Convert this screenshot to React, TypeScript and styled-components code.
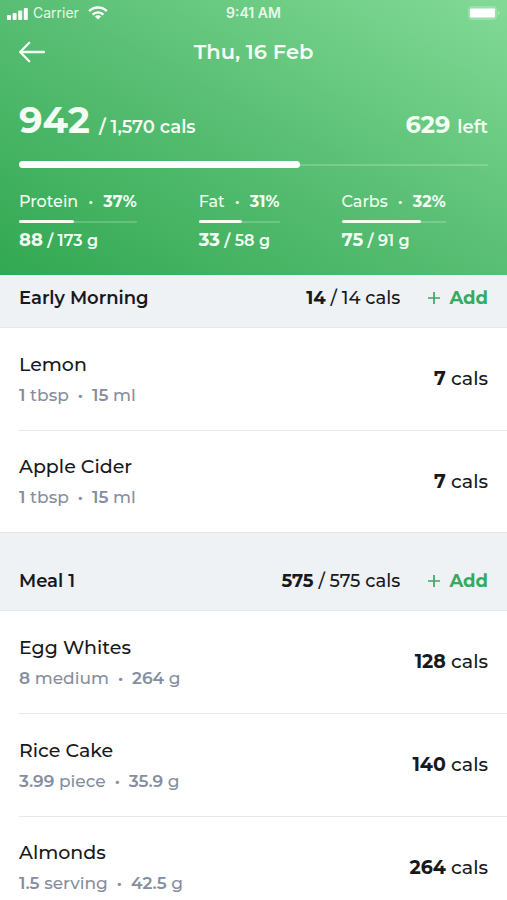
import React from "react";
import styled, { createGlobalStyle } from "styled-components";

const GlobalStyle = createGlobalStyle`
  *, *::before, *::after { box-sizing: border-box; }
  body {
    margin: 0;
    background: #ffffff;
    color: #17191c;
    font-family: Montserrat, Inter, "Open Sans", sans-serif;
    font-size: 18px;
    font-weight: 500;
  }
  h1, h2, h3, p, ul { margin: 0; padding: 0; font: inherit; }
  ul { list-style: none; }
  button { border: 0; padding: 0; background: none; color: inherit; font: inherit; cursor: pointer; }
`;

const Screen = styled.div`
  display: flex;
  flex-direction: column;
  height: 100vh;
`;

const Header = styled.header`
  flex: none;
  padding-bottom: 24px;
  color: #f3fff5;
  background: linear-gradient(to top right, #32a852 0%, #58be73 50%, #82da96 100%);
`;

const StatusBar = styled.div`
  display: grid;
  grid-template-columns: 1fr auto 1fr;
  align-items: center;
  height: 26px;
  padding: 0 7px;
  font-family: Inter, sans-serif;
  font-size: 14px;
  line-height: 16px;
  color: #e6fbe9;
`;

const Carrier = styled.div`
  display: flex;
  align-items: center;
  gap: 5px;
  font-weight: 400;
`;

const CarrierName = styled.span`
  padding-right: 4px;
`;

const Clock = styled.span`
  font-weight: 600;
`;

const Battery = styled.svg`
  justify-self: end;
`;

const NavBar = styled.nav`
  display: grid;
  grid-template-columns: 1fr auto 1fr;
  align-items: center;
  height: 52px;
  padding: 0 19px;
`;

const BackButton = styled.button`
  display: flex;
  width: 28px;
  height: 28px;
  align-items: center;
`;

const DateTitle = styled.h1`
  font-size: 21px;
  line-height: 24px;
  font-weight: 600;
`;

const Totals = styled.div`
  display: flex;
  justify-content: space-between;
  align-items: baseline;
  padding: 20px 19px 0;
  font-size: 18px;
  line-height: 44px;
  font-weight: 600;
`;

const BigNumber = styled.strong`
  margin-right: 9px;
  font-size: 37px;
  font-weight: 700;
`;

const LeftNumber = styled.strong`
  margin-right: 7px;
  font-size: 24px;
  font-weight: 700;
`;

const DayBar = styled.div`
  display: flex;
  align-items: center;
  height: 7px;
  margin: 12px 19px 24px;
  background: linear-gradient(#ffffff30, #ffffff30) center / 100% 2px no-repeat;
`;

const DayFill = styled.div`
  height: 7px;
  border-radius: 4px;
  background: #ffffff;
`;

const Macros = styled.ul`
  display: flex;
  gap: 62px;
  padding: 0 19px;
`;

const Macro = styled.li`
  font-size: 16px;
  line-height: 20px;
  white-space: nowrap;
`;

const MacroLabel = styled.p`
  display: flex;
  justify-content: space-between;
  gap: 10px;
`;

const MacroBar = styled.div`
  height: 3px;
  margin: 8px 0 7px;
  background: linear-gradient(#ffffff30, #ffffff30) center / 100% 2px no-repeat;
`;

const MacroFill = styled.div`
  height: 3px;
  border-radius: 2px;
  background: #f3fff5;
`;

const Bold = styled.strong`
  font-weight: 700;
`;

const MacroTotal = styled.p`
  font-weight: 600;
`;

const MacroValue = styled.strong`
  font-size: 18px;
  font-weight: 700;
`;

const MealList = styled.main`
  flex: 1;
  min-height: 0;
  overflow-y: auto;
  scrollbar-width: none;
`;

const MealHeader = styled.header<{ $compact: boolean }>`
  display: flex;
  align-items: flex-end;
  height: ${({ $compact }) => ($compact ? 53 : 79)}px;
  padding: 0 19px 17px;
  border-top: ${({ $compact }) => ($compact ? 0 : 1)}px solid #e2e6ea;
  border-bottom: 1px solid #e5e9ee;
  background: #eef2f5;
  line-height: 24px;
`;

const MealName = styled.h2`
  flex: 1;
  font-weight: 600;
`;

const AddButton = styled.button`
  display: flex;
  align-items: center;
  gap: 9px;
  margin-left: 28px;
  color: #35aa63;
  font-weight: 700;
  line-height: 24px;
`;

const Food = styled.li`
  display: flex;
  align-items: center;
  justify-content: space-between;
  height: 103px;
  margin-left: 19px;
  padding-right: 19px;
  border-bottom: 1px solid #e6e8eb;

  &:last-child {
    height: 101px;
    border-bottom: 0;
  }
`;

const FoodName = styled.h3`
  font-size: 19px;
  line-height: 28px;
`;

const Portion = styled.p`
  padding-top: 3px;
  font-size: 17px;
  line-height: 26px;
  color: #858e9f;

  strong { font-weight: 600; }
`;

const Dot = styled.span`
  margin: 0 9px;
  font-weight: 700;
`;

const FoodCals = styled.p`
  font-size: 19px;
  line-height: 24px;

  strong { font-weight: 700; }
`;

type FoodItem = { name: string; amount: string; unit: string; weight: string; measure: string; cals: number };
type Meal = { name: string; eaten: number; planned: number; foods: FoodItem[] };

const macros = [
  { name: "Protein", share: 37, eaten: 88, goal: 173, fill: 47 },
  { name: "Fat", share: 31, eaten: 33, goal: 58, fill: 53 },
  { name: "Carbs", share: 32, eaten: 75, goal: 91, fill: 76 },
];

const meals: Meal[] = [
  {
    name: "Early Morning",
    eaten: 14,
    planned: 14,
    foods: [
      { name: "Lemon", amount: "1", unit: "tbsp", weight: "15", measure: "ml", cals: 7 },
      { name: "Apple Cider", amount: "1", unit: "tbsp", weight: "15", measure: "ml", cals: 7 },
    ],
  },
  {
    name: "Meal 1",
    eaten: 575,
    planned: 575,
    foods: [
      { name: "Egg Whites", amount: "8", unit: "medium", weight: "264", measure: "g", cals: 128 },
      { name: "Rice Cake", amount: "3.99", unit: "piece", weight: "35.9", measure: "g", cals: 140 },
      { name: "Almonds", amount: "1.5", unit: "serving", weight: "42.5", measure: "g", cals: 264 },
    ],
  },
];

const SignalIcon = () => (
  <svg width="21" height="13" viewBox="0 0 21 13" fill="#ffffff" aria-hidden="true">
    <rect x="0" y="8" width="4" height="5" rx="1" />
    <rect x="5.6" y="6" width="4" height="7" rx="1" />
    <rect x="11.2" y="3.5" width="4" height="9.5" rx="1" />
    <rect x="16.8" y="1" width="4" height="12" rx="1" />
  </svg>
);

const WifiIcon = () => (
  <svg width="20" height="14" viewBox="0 0 20 14" fill="none" stroke="#ffffff" strokeWidth="2.4" aria-hidden="true">
    <path d="M1.2 5.2a12.4 12.4 0 0 1 17.6 0" />
    <path d="M4.6 8.6a7.6 7.6 0 0 1 10.8 0" />
    <path d="M10 13.6 6.9 10.5a4.4 4.4 0 0 1 6.2 0z" fill="#ffffff" stroke="none" />
  </svg>
);

const BatteryIcon = () => (
  <Battery width="32" height="14" viewBox="0 0 32 14" role="img" aria-label="Battery full">
    <rect x="0.5" y="0.5" width="28" height="13" rx="3" fill="#a9e8b7" fillOpacity="0.6" stroke="#a9e8b7" strokeOpacity="0.5" />
    <rect x="2" y="2.5" width="25" height="9" rx="1" fill="#ffffff" />
    <path d="M29.8 5v4.4c1-.4 1.6-1.2 1.6-2.2s-.6-1.8-1.6-2.2z" fill="#a9e8b7" />
  </Battery>
);

const BackIcon = () => (
  <svg width="27" height="22" viewBox="0 0 27 22" fill="none" stroke="#f3fff5" strokeWidth="2.3" strokeLinecap="round" strokeLinejoin="round" aria-hidden="true">
    <path d="M25 11H1.2M10.2 1.8 1.2 11l9 9.2" />
  </svg>
);

const PlusIcon = () => (
  <svg width="12" height="12" viewBox="0 0 12 12" stroke="currentColor" strokeWidth="1.7" aria-hidden="true">
    <path d="M6 0v12M0 6h12" />
  </svg>
);

export default function App() {
  return (
    <Screen>
      <GlobalStyle />
      <Header>
        <StatusBar>
          <Carrier>
            <SignalIcon />
            <CarrierName>Carrier</CarrierName>
            <WifiIcon />
          </Carrier>
          <Clock>9:41 AM</Clock>
          <BatteryIcon />
        </StatusBar>
        <NavBar>
          <BackButton type="button" aria-label="Back">
            <BackIcon />
          </BackButton>
          <DateTitle>Thu, 16 Feb</DateTitle>
        </NavBar>
        <Totals>
          <p><BigNumber>942</BigNumber>/ 1,570 cals</p>
          <p><LeftNumber>629</LeftNumber>left</p>
        </Totals>
        <DayBar>
          <DayFill style={{ width: `${(942 / 1570) * 100}%` }} />
        </DayBar>
        <Macros>
          {macros.map((m) => (
            <Macro key={m.name}>
              <MacroLabel>
                <span>{m.name}</span>
                <span>•</span>
                <Bold>{m.share}%</Bold>
              </MacroLabel>
              <MacroBar>
                <MacroFill style={{ width: `${m.fill}%` }} />
              </MacroBar>
              <MacroTotal><MacroValue>{m.eaten}</MacroValue> / {m.goal} g</MacroTotal>
            </Macro>
          ))}
        </Macros>
      </Header>
      <MealList>
        {meals.map((meal, index) => (
          <section key={meal.name}>
            <MealHeader $compact={index === 0}>
              <MealName>{meal.name}</MealName>
              <p><Bold>{meal.eaten}</Bold> / {meal.planned} cals</p>
              <AddButton type="button" aria-label={`Add to ${meal.name}`}>
                <PlusIcon />
                Add
              </AddButton>
            </MealHeader>
            <ul>
              {meal.foods.map((food) => (
                <Food key={food.name}>
                  <div>
                    <FoodName>{food.name}</FoodName>
                    <Portion>
                      <strong>{food.amount}</strong> {food.unit}
                      <Dot>·</Dot>
                      <strong>{food.weight}</strong> {food.measure}
                    </Portion>
                  </div>
                  <FoodCals><Bold>{food.cals}</Bold> cals</FoodCals>
                </Food>
              ))}
            </ul>
          </section>
        ))}
      </MealList>
    </Screen>
  );
}
